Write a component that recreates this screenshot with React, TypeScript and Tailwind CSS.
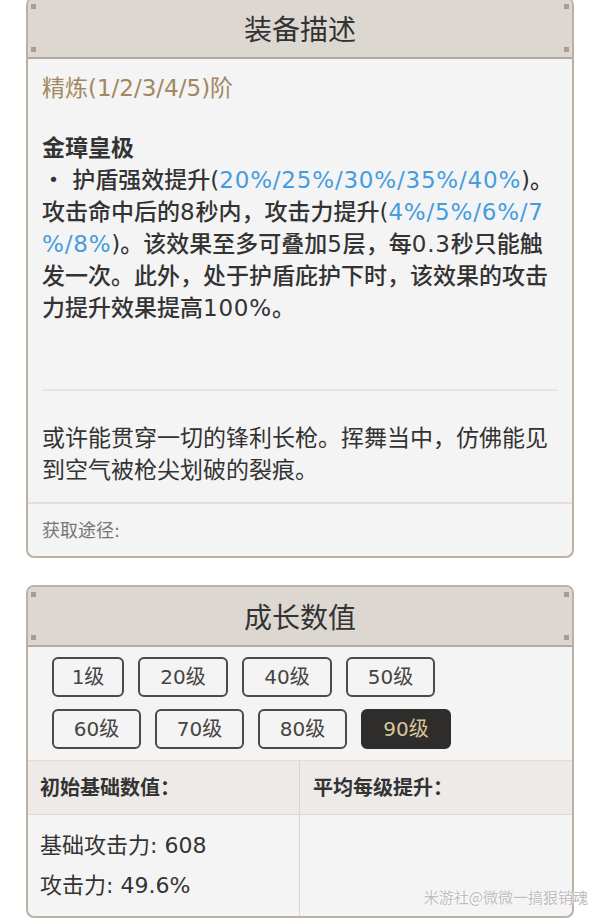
import React from "react";

const font = { fontFamily: '"DejaVu Sans", "Noto Sans CJK SC", sans-serif' };
const cjk = { fontFamily: '"Noto Sans CJK SC", sans-serif' };

function Dots() {
  return (
    <>
      <span className="absolute left-[3px] top-[5px] w-[5px] h-[5px] bg-[#aa9d93]" />
      <span className="absolute left-[3px] bottom-[5px] w-[5px] h-[5px] bg-[#aa9d93]" />
      <span className="absolute right-[3px] top-[5px] w-[5px] h-[5px] bg-[#aa9d93]" />
      <span className="absolute right-[3px] bottom-[5px] w-[5px] h-[5px] bg-[#aa9d93]" />
    </>
  );
}

function Header({ title }: { title: string }) {
  return (
    <div className="relative flex items-center justify-center bg-[#ddd7d1] border-b-2 border-[#b5a89d] h-[60px]">
      <Dots />
      <span className="text-[28px] text-[#333] leading-none" style={cjk}>
        {title}
      </span>
    </div>
  );
}

const B = ({ children }: { children: React.ReactNode }) => (
  <span className="text-[#449de0] tracking-[0.8px]">{children}</span>
);
const L = ({ children }: { children: React.ReactNode }) => (
  <span className="tracking-[0.8px]">{children}</span>
);

function LevelBtn({ label, w, active }: { label: string; w: string; active?: boolean }) {
  return (
    <div
      className={`h-[40px] ${w} flex items-center justify-center rounded-[6px] border-2 text-[20px] ${
        active ? "bg-[#2e2d2b] border-[#2e2d2b] text-[#d9c59c]" : "border-[#4a4a4a] text-[#444]"
      }`}
    >
      {label}
    </div>
  );
}

export default function App() {
  return (
    <div className="relative w-[600px] h-[919px] bg-white overflow-hidden" style={font}>
      {/* Card 1 */}
      <div className="mx-[26px] -mt-[3px] rounded-[8px] border-2 border-[#bdb1a6] bg-[#f4f4f4] overflow-hidden">
        <Header title="装备描述" />
        <div className="px-[14px] pt-[13px]">
          <div className="text-[23px] leading-[32px] text-[#a3875f]">精炼(1/2/3/4/5)阶</div>
          <div className="mt-[28px] text-[23px] leading-[32px] text-[#333] font-medium whitespace-nowrap">
            <div className="font-bold">金璋皇极</div>
            <div>・ 护盾强效提升(<B>20%/25%/30%/35%/40%</B>)。</div>
            <div>攻击命中后的<L>8</L>秒内，攻击力提升(<B>4%/5%/6%/7</B></div>
            <div><B>%/8%</B>)。该效果至多可叠加<L>5</L>层，每<L>0.3</L>秒只能触</div>
            <div>发一次。此外，处于护盾庇护下时，该效果的攻击</div>
            <div>力提升效果提高<L>100%</L>。</div>
          </div>
          <div className="mt-[65px] h-[2px] bg-[#e6e6e6]" />
          <div className="mt-[31px] text-[23px] leading-[32px] text-[#333] whitespace-nowrap">
            <div>或许能贯穿一切的锋利长枪。挥舞当中，仿佛能见</div>
            <div>到空气被枪尖划破的裂痕。</div>
          </div>
        </div>
        <div className="mt-[16px] border-t-2 border-[#e2dedb] px-[14px] h-[54px] flex items-center">
          <span className="text-[18px] text-[#777]">获取途径:</span>
        </div>
      </div>

      {/* Card 2 */}
      <div className="mx-[26px] mt-[27px] rounded-[8px] border-2 border-[#bdb1a6] bg-[#f4f4f4] overflow-hidden h-[333px]">
        <Header title="成长数值" />
        <div className="pl-[24px] pt-[10px] flex flex-col gap-[12px]">
          <div className="flex gap-[14px]">
            <LevelBtn label="1级" w="w-[72px]" />
            <LevelBtn label="20级" w="w-[90px]" />
            <LevelBtn label="40级" w="w-[90px]" />
            <LevelBtn label="50级" w="w-[89px]" />
          </div>
          <div className="flex gap-[14px]">
            <LevelBtn label="60级" w="w-[89px]" />
            <LevelBtn label="70级" w="w-[89px]" />
            <LevelBtn label="80级" w="w-[89px]" />
            <LevelBtn label="90级" w="w-[90px]" active />
          </div>
        </div>
        <div className="mt-[11px] grid grid-cols-[272px_1fr] border-t border-[#e2dedb]">
          <div className="h-[53px] bg-[#edeae7] border-r border-[#d9d4cf] flex items-center pl-[12px] text-[20px] font-bold text-[#333]">
            初始基础数值：
          </div>
          <div className="h-[53px] bg-[#edeae7] flex items-center pl-[13px] text-[20px] font-bold text-[#333]">
            平均每级提升：
          </div>
          <div className="border-r border-t border-[#ddd8d3] pl-[12px] pt-[11px] h-[110px] text-[22px] leading-[40px] text-[#333]">
            <div>基础攻击力: 608</div>
            <div>攻击力: 49.6%</div>
          </div>
          <div className="border-t border-[#ddd8d3]" />
        </div>
      </div>

      {/* Watermark */}
      <div
        className="absolute right-[12px] top-[886px] text-[15px] text-[#bdbdbd]"
        style={{ ...cjk, textShadow: "0 0 2px #fff, 0 0 2px #fff" }}
      >
        米游社@微微一搞狠销魂
      </div>
    </div>
  );
}
